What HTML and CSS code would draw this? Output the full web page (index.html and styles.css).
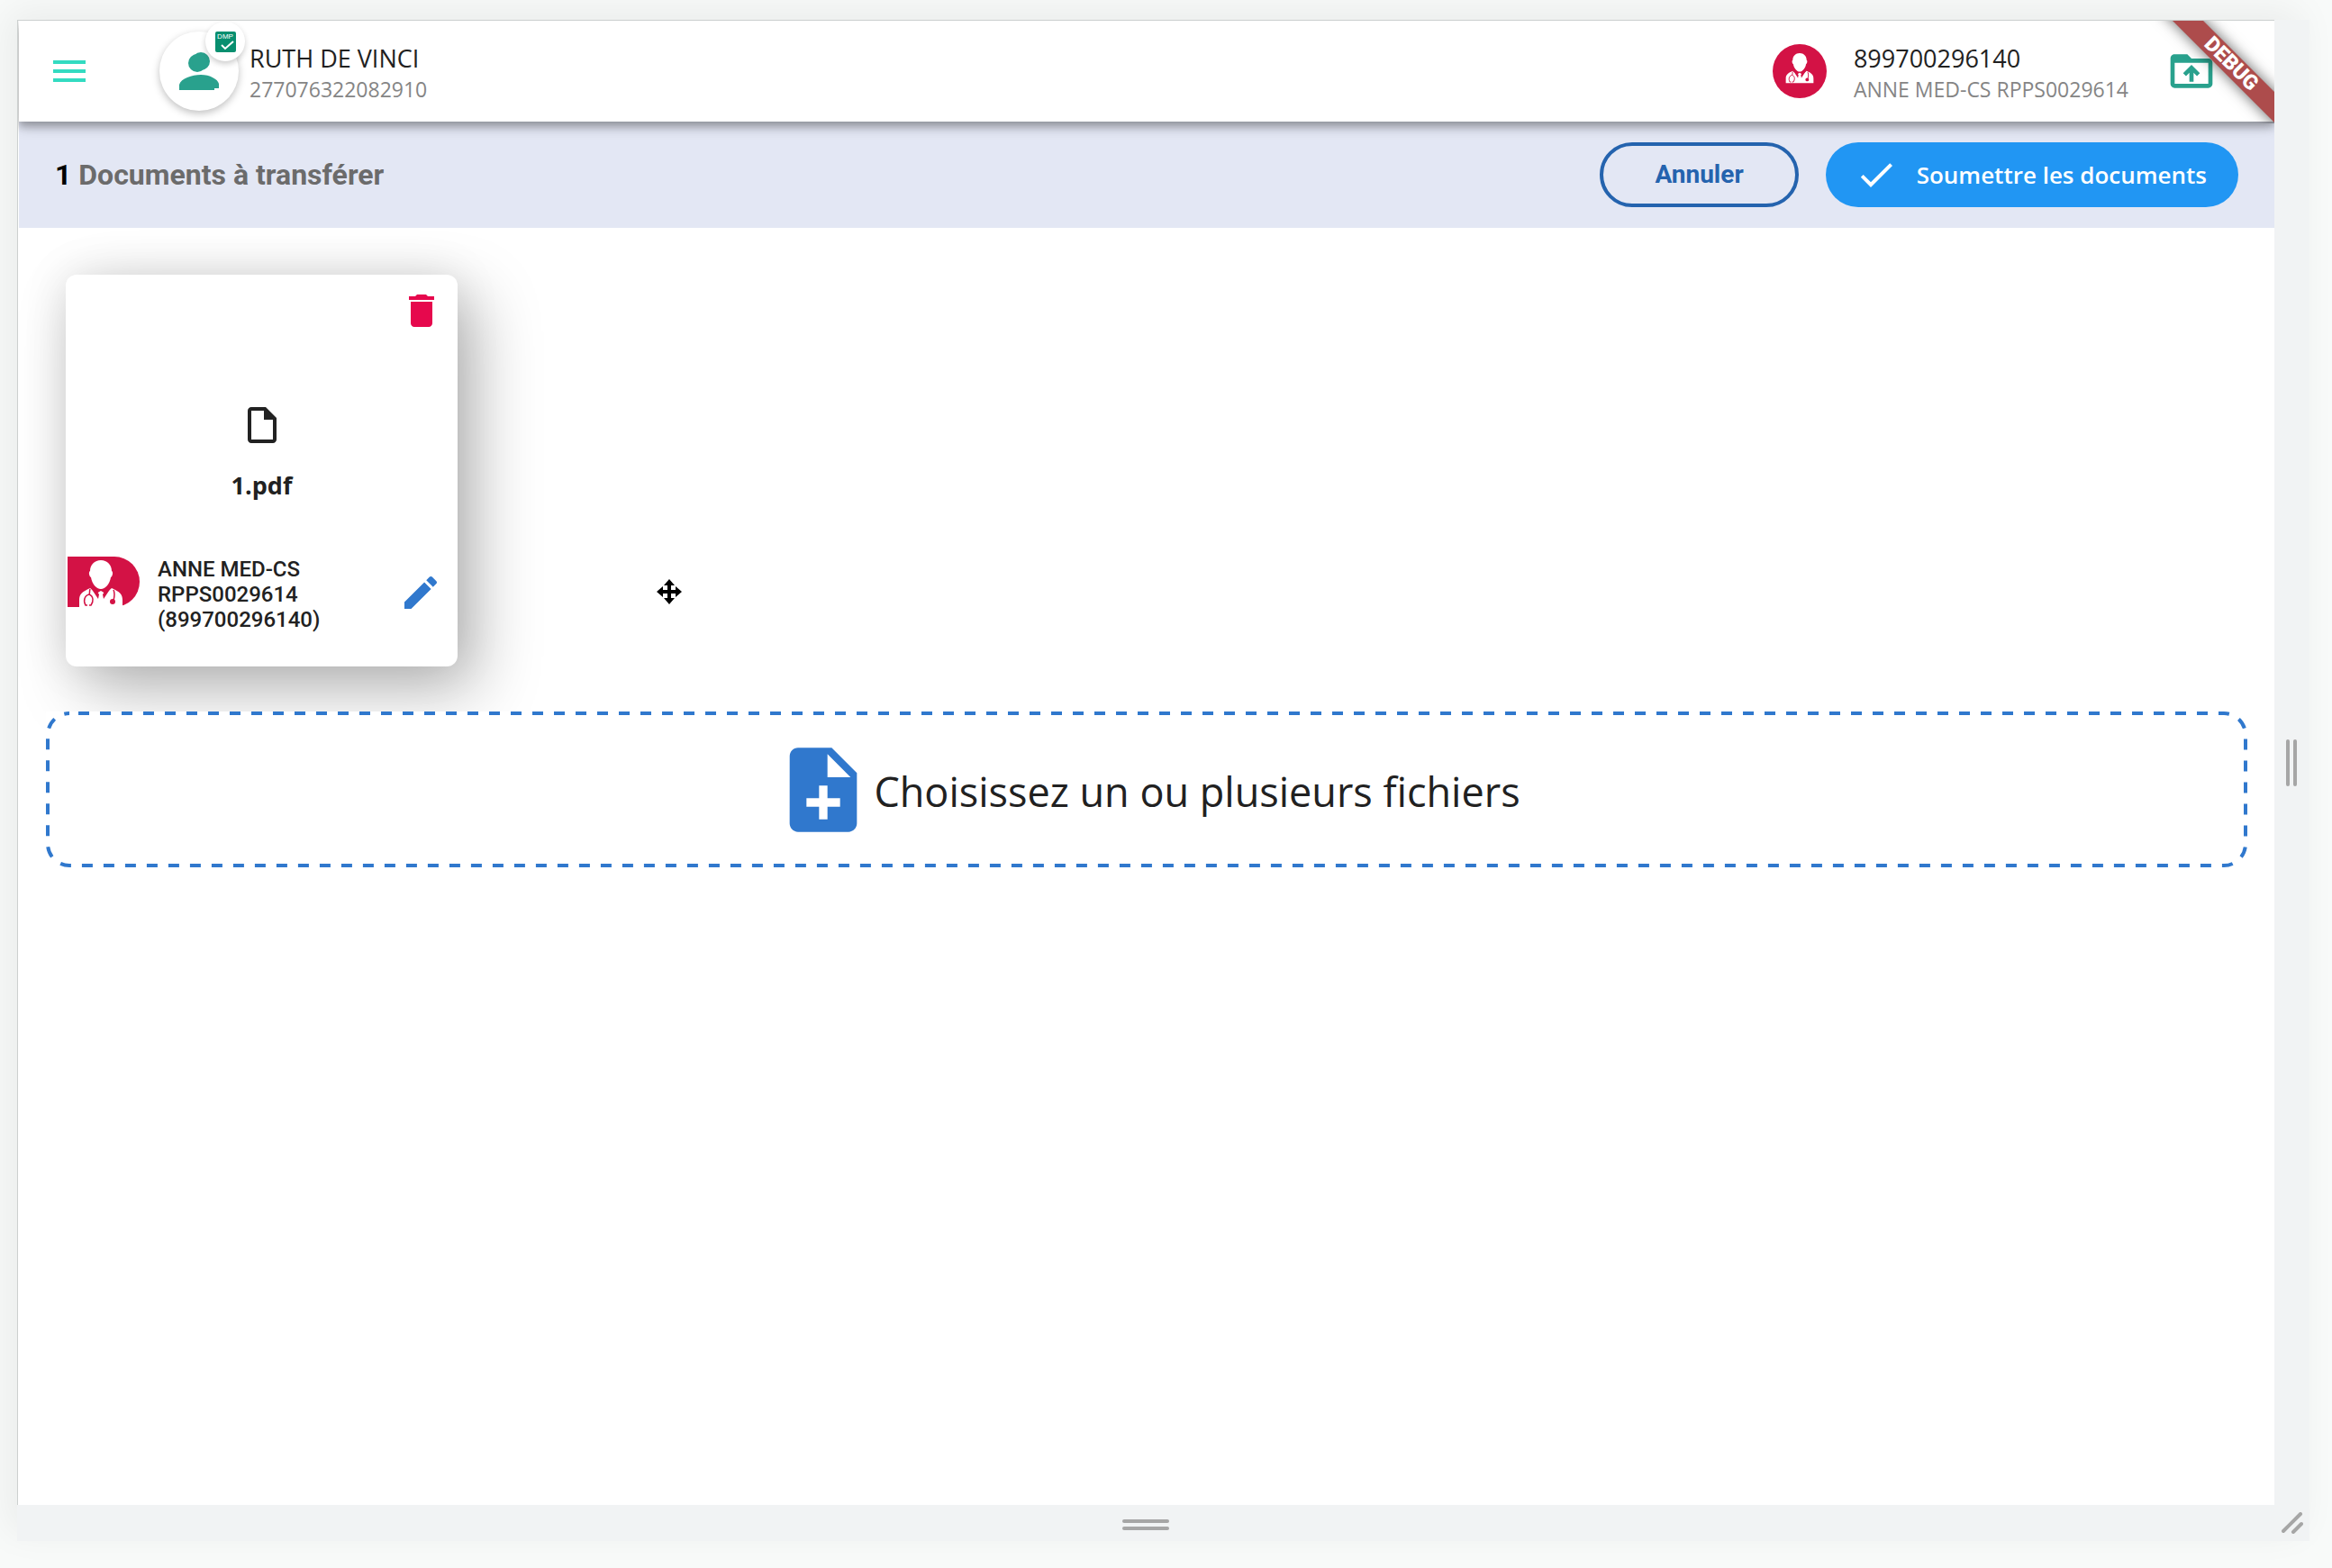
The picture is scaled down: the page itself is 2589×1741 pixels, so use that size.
FILE: index.html
```html
<!DOCTYPE html>
<html lang="fr">
<head>
<meta charset="utf-8">
<meta name="viewport" content="width=device-width, initial-scale=1">
<title>Documents à transférer</title>
<link rel="stylesheet" href="styles.css">
</head>
<body>
<svg class="sprite" aria-hidden="true">
  <symbol id="doctor" viewBox="0 0 50 54">
    <path d="M25 2c7 0 12 5 12 12 2 1 1 6-1 7-1 7-6 13-11 13S15 28 14 21c-2-1-3-6-1-7C13 7 18 2 25 2z" fill="#fff"/>
    <path d="M1 54V46c0-6 3-9 12-13l7 6 5-3 5 3 7-6c9 4 12 7 12 13v8z" fill="#fff"/>
    <path d="M14 33l8 12 1-5-5-7zM36 33l-8 12-1-5 5-7z" fill="#d31245"/>
    <path d="M13 34c-1 3 0 4-1 6-5 1-7 7-4 12h2M12 40c5 2 5 8 2 12h-2M39 35c2 4 1 8 0 12" fill="none" stroke="#d31245" stroke-width="1.500"/>
    <circle cx="38" cy="48" r="3" fill="#d31245"/>
  </symbol>
</svg>
<div class="device">
  <div class="app">
    <header class="topbar">
      <button class="icon-button" type="button" aria-label="Menu">
        <svg width="48" height="48" viewBox="0 0 24 24" fill="#33dbc1"><path d="M3 18h18v-2H3v2zm0-5h18v-2H3v2zm0-7v2h18V6H3z"/></svg>
      </button>
      <div class="patient">
        <div class="avatar">
          <svg width="44" height="42" viewBox="0 0 44 42" fill="#29a18d"><circle cx="20" cy="12" r="10"/><circle cx="24" cy="10" r="10"/><path d="M0 42V36C2 29 14 25 24 25c10 0 19 5 20 10v5h-5v2z"/></svg>
          <span class="badge">
            <svg width="23" height="23" viewBox="0 0 23 23" role="img" aria-label="DMP"><rect width="23" height="23" rx="2" fill="#088f6f"/><text class="badge-text" x="11" y="8" text-anchor="middle">DMP</text><path d="M7 15l4 4 9-8" fill="none" stroke="#fff" stroke-width="2"/></svg>
          </span>
        </div>
        <div class="identity">
          <span class="identity-name">RUTH DE VINCI</span>
          <span class="identity-id">277076322082910</span>
        </div>
      </div>
      <div class="account">
        <span class="account-photo"><svg width="32" height="36"><use href="#doctor"/></svg></span>
        <div class="identity">
          <span class="identity-name strong">899700296140</span>
          <span class="identity-id">ANNE MED-CS RPPS0029614</span>
        </div>
      </div>
      <button class="icon-button upload" type="button" aria-label="Envoyer un dossier">
        <svg width="56" height="56" viewBox="0 0 24 24" fill="#29a18d"><path d="M20 6h-8l-2-2H4c-1.100 0-2 .9-2 2v12c0 1.100.9 2 2 2h16c1.100 0 2-.9 2-2V8c0-1.100-.9-2-2-2zm0 12H4V8h16v10zM9.400 14.400L11 12.800V17h2v-4.200l1.600 1.600L16 13l-4-4-4 4z"/></svg>
      </button>
      <div class="debug"><span class="debug-band">DEBUG</span></div>
    </header>
    <div class="actionbar">
      <h1 class="title"><span class="count">1</span> Documents à transférer</h1>
      <button class="btn btn-outline" type="button">Annuler</button>
      <button class="btn btn-primary" type="button">
        <svg width="48" height="48" viewBox="0 0 24 24" fill="#fff"><path d="M9 16.170L4.830 12l-1.420 1.410L9 19 21 7l-1.410-1.410z"/></svg>
        Soumettre les documents
      </button>
    </div>
    <main class="content">
      <div class="cards">
        <article class="card">
          <button class="icon-button delete" type="button" aria-label="Supprimer">
            <svg width="48" height="48" viewBox="0 0 24 24" fill="#e6084d"><path d="M6 19c0 1.100.9 2 2 2h8c1.100 0 2-.9 2-2V7H6v12zM19 4h-3.500l-1-1h-5l-1 1H5v2h14V4z"/></svg>
          </button>
          <div class="file">
            <svg width="48" height="48" viewBox="0 0 24 24" fill="#222"><path d="M14 2H6c-1.100 0-2 .9-2 2v16c0 1.100.9 2 2 2h12c1.100 0 2-.9 2-2V8l-6-6zM6 20V4h7v5h5v11H6z"/></svg>
            <span class="file-name">1.pdf</span>
          </div>
          <div class="author">
            <span class="author-photo"><svg width="50" height="54"><use href="#doctor"/></svg></span>
            <span class="author-name">ANNE MED-CS RPPS0029614 (899700296140)</span>
            <button class="icon-button" type="button" aria-label="Modifier">
              <svg width="48" height="48" viewBox="0 0 24 24" fill="#3078cd"><path d="M3 17.250V21h3.750L17.810 9.940l-3.750-3.750L3 17.250zM20.710 7.040c.39-.39.39-1.020 0-1.410l-2.340-2.340c-.39-.39-1.020-.39-1.410 0l-1.830 1.830 3.750 3.750 1.830-1.830z"/></svg>
            </button>
          </div>
        </article>
      </div>
      <button class="dropzone" type="button">
        <svg class="dropzone-outline" aria-hidden="true"><rect x="2" y="2" rx="24"/></svg>
        <svg width="112" height="112" viewBox="0 0 24 24" fill="#3078cd"><path d="M14 2H6c-1.100 0-1.990.9-1.990 2L4 20c0 1.100.89 2 1.990 2H18c1.100 0 2-.9 2-2V8l-6-6zm2 14h-3v3h-2v-3H8v-2h3v-3h2v3h3v2zm-3-7V3.500L18.500 9H13z"/></svg>
        <span class="dropzone-label">Choisissez un ou plusieurs fichiers</span>
      </button>
    </main>
    <svg class="cursor" width="28" height="28" viewBox="0 0 28 28" aria-hidden="true"><path d="M14 0l6 7h-4v5h5V8l7 6-7 6v-4h-5v5h4l-6 7-6-7h4v-5H7v4l-7-6 7-6v4h5V7H8z"/></svg>
  </div>
  <div class="handle handle-right"><i></i><i></i></div>
  <div class="handle handle-bottom"><i></i><i></i></div>
  <div class="handle">
    <svg width="24" height="24" viewBox="0 0 24 24" fill="none" stroke="#a6a6a6" stroke-width="4" stroke-linecap="round"><path d="M2 21L21 2M13 22l9-9"/></svg>
  </div>
</div>
</body>
</html>
```
FILE: styles.css
```css
* {
  box-sizing: border-box;
}

body {
  margin: 0;
  min-height: 100vh;
  padding: 22px 25px 30px 19px;
  display: flex;
  background: #f8faf9;
  color: #212121;
  font-family: "Segoe UI", "Open Sans", "Noto Sans", sans-serif;
}

button {
  padding: 0;
  border: 0;
  background: none;
  color: inherit;
  font: inherit;
  cursor: pointer;
}

svg {
  display: block;
  flex: none;
}

.sprite {
  position: absolute;
  width: 0;
  height: 0;
}

.device {
  flex: 1;
  display: grid;
  grid-template-columns: minmax(0, 1fr) 39px;
  grid-template-rows: 1fr 40px;
  box-shadow: -10px -10px 40px rgba(0, 0, 0, 0.06);
}

.app {
  position: relative;
  display: flex;
  flex-direction: column;
  overflow: hidden;
  padding-left: 1px;
  border: solid #ccd0cf;
  border-width: 1px 0 0 1px;
  background: #fff;
}

/* Resize handles */

.handle {
  display: flex;
  align-items: center;
  justify-content: center;
  gap: 4px;
  background: #f1f3f4;
}

.handle i {
  width: 4px;
  height: 52px;
  border-radius: 2px;
  background: #a6a6a6;
}

.handle-right {
  padding-right: 1px;
}

.handle-bottom {
  flex-direction: column;
  padding-top: 4px;
}

.handle-bottom i {
  width: 52px;
  height: 4px;
}

/* Top bar */

.topbar {
  position: relative;
  z-index: 2;
  display: flex;
  align-items: center;
  height: 112px;
  padding: 0 64px 0 32px;
  background: #fff;
  box-shadow: 0 4px 8px rgba(0, 0, 0, 0.2), 0 8px 10px rgba(0, 0, 0, 0.14), 0 2px 20px rgba(0, 0, 0, 0.12);
}

.patient {
  flex: 1;
  display: flex;
  align-items: center;
  gap: 12px;
  margin-left: 76px;
}

.avatar {
  position: relative;
  display: flex;
  align-items: center;
  justify-content: center;
  width: 88px;
  height: 88px;
  border-radius: 50%;
  background: #fff;
  box-shadow: 0 3px 8px rgba(0, 0, 0, 0.25);
}

.badge {
  position: absolute;
  top: -11px;
  right: -7px;
  display: flex;
  align-items: center;
  justify-content: center;
  width: 44px;
  height: 44px;
  border-radius: 50%;
  background: #fff;
  box-shadow: 0 3px 6px rgba(0, 0, 0, 0.2);
}

.badge-text {
  fill: #fff;
  font: 8px "Liberation Sans", sans-serif;
}

.identity {
  display: flex;
  flex-direction: column;
  padding-top: 6px;
  line-height: 35px;
  white-space: nowrap;
}

.identity-name {
  font-size: 27px;
}

.identity-name.strong {
  font-weight: 500;
}

.identity-id {
  color: #858585;
  font-size: 23px;
}

.account {
  display: flex;
  align-items: center;
  gap: 30px;
}

.account-photo {
  display: flex;
  align-items: center;
  justify-content: center;
  width: 60px;
  height: 60px;
  padding-bottom: 8px;
  border-radius: 50%;
  background: #d31245;
}

.upload {
  margin-left: 42px;
}

.debug {
  position: absolute;
  top: 0;
  right: 0;
  width: 140px;
  height: 114px;
  overflow: hidden;
}

.debug-band {
  position: absolute;
  top: 36px;
  right: -52px;
  width: 200px;
  background: #ad4c4c;
  box-shadow: 0 0 16px rgba(0, 0, 0, 0.6);
  color: #fff;
  font: 900 23px/24px Roboto, sans-serif;
  text-align: center;
  transform: rotate(45deg);
}

/* Action bar */

.actionbar {
  display: flex;
  align-items: center;
  gap: 30px;
  height: 118px;
  padding: 0 40px;
  background: #e3e7f4;
}

.title {
  flex: 1;
  margin: 0;
  color: #6b6b6b;
  font: 700 32px/40px Roboto, sans-serif;
}

.count {
  color: #000;
}

.btn {
  display: flex;
  align-items: center;
  justify-content: center;
  height: 72px;
  border-radius: 36px;
  white-space: nowrap;
}

.btn-outline {
  padding: 0 57px;
  border: 4px solid #2463ae;
  color: #2463ae;
  font: 700 28px/32px Roboto, sans-serif;
}

.btn-primary {
  gap: 21px;
  padding: 0 35px 0 32px;
  background: #2196f3;
  color: #fff;
  font-size: 26px;
  font-weight: 600;
}

/* Documents */

.content {
  flex: 1;
  padding: 52px 30px;
}

.cards {
  display: flex;
  flex-wrap: wrap;
  gap: 40px;
  padding: 0 22px 50px;
}

.card {
  display: flex;
  flex-direction: column;
  width: 435px;
  height: 435px;
  padding: 16px 2px 38px;
  border-radius: 12px;
  background: #fff;
  box-shadow: 20px 26px 72px rgba(0, 0, 0, 0.28), 0 0 50px rgba(0, 0, 0, 0.1);
}

.delete {
  align-self: flex-end;
  margin-right: 14px;
}

.file {
  flex: 1;
  display: flex;
  flex-direction: column;
  align-items: center;
  gap: 23px;
  padding-top: 79px;
}

.file-name {
  font-size: 27px;
  font-weight: 700;
  line-height: 40px;
}

.author {
  display: flex;
  align-items: center;
  gap: 20px;
  padding-right: 15px;
}

.author-photo {
  align-self: flex-start;
  display: flex;
  align-items: flex-end;
  width: 80px;
  height: 56px;
  padding-left: 12px;
  border-radius: 0 28px 28px 0;
  background: #d31245;
}

.author-name {
  flex: 1;
  max-width: 200px;
  margin-right: auto;
  font: 500 24px/28px Roboto, sans-serif;
}

.author .icon-button {
  margin: 0 0 4px auto;
}

.dropzone {
  position: relative;
  display: flex;
  align-items: center;
  justify-content: center;
  width: 100%;
  height: 173px;
  background: #fff;
  font-size: 45px;
}

.dropzone-label {
  padding-top: 4px;
}

.dropzone-outline {
  position: absolute;
  inset: 0;
  width: 100%;
  height: 100%;
}

.dropzone-outline rect {
  width: calc(100% - 4px);
  height: calc(100% - 4px);
  fill: none;
  stroke: #3078cd;
  stroke-width: 4px;
  stroke-dasharray: 12px;
  stroke-dashoffset: 14px;
}

.cursor {
  position: absolute;
  top: 620px;
  left: 709px;
}
```
